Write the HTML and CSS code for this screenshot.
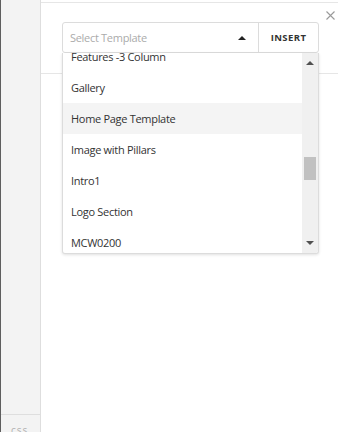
FILE: index.html
```html
<!DOCTYPE html>
<html>
<head>
<meta charset="utf-8">
<link rel="stylesheet" href="styles.css">
</head>
<body>
<div class="app">
  <aside class="sidebar">
    <div class="sidebar-top"></div>
    <div class="sidebar-foot">css</div>
  </aside>
  <main class="main">
    <div class="panel">
      <div class="header">
        <button class="close" aria-label="Close">
          <svg width="9" height="9" viewBox="0 0 9 9"><path d="M0.5 0.5L8.5 8.5M8.5 0.5L0.5 8.5" stroke="#9a9a9a" stroke-width="1.1" fill="none"/></svg>
        </button>
        <div class="picker">
          <div class="select">
            <div class="select-field">
              <span class="placeholder">Select Template</span>
              <span class="caret"></span>
            </div>
            <button class="insert">INSERT</button>
          </div>
          <div class="dropdown">
            <div class="options">
              <ul class="list">
                <li class="item">Features -3 Column</li>
                <li class="item">Gallery</li>
                <li class="item is-hover">Home Page Template</li>
                <li class="item">Image with Pillars</li>
                <li class="item">Intro1</li>
                <li class="item">Logo Section</li>
                <li class="item">MCW0200</li>
              </ul>
            </div>
            <div class="scrollbar">
              <span class="arrow up"></span>
              <div class="track"><div class="thumb"></div></div>
              <span class="arrow down"></span>
            </div>
          </div>
        </div>
      </div>
    </div>
  </main>
</div>
</body>
</html>
```
FILE: styles.css
```css
* { box-sizing: border-box; }
html, body { margin: 0; padding: 0; }
body {
  font-family: "Open Sans", "Noto Sans", sans-serif;
  background: #fff;
  width: 338px;
  height: 432px;
  overflow: hidden;
}
.app {
  display: flex;
  height: 432px;
}
.sidebar {
  width: 41px;
  flex: none;
  background: #f3f3f3;
  border-left: 1px solid #5e5e5e;
  border-right: 1px solid #dedede;
  display: flex;
  flex-direction: column;
}
.sidebar-top { flex: 1; }
.sidebar-foot {
  height: 18px;
  border-top: 1px solid #dedede;
  font-size: 10px;
  color: #b0b0b0;
  padding: 9px 0 0 10px;
  line-height: 12px;
  letter-spacing: 1px;
}
.main {
  flex: 1;
  padding-top: 2px;
}
.panel {
  border-top: 1px solid #e6e6e6;
  height: 100%;
}
.header {
  position: relative;
  height: 71px;
  border-bottom: 1px solid #e6e6e6;
  padding: 19px 0 0 21px;
}
.close {
  position: absolute;
  top: 8px;
  right: 3px;
  border: 0;
  background: none;
  padding: 0;
  width: 9px;
  height: 9px;
  display: flex;
}
.picker {
  position: relative;
  width: 257px;
}
.select {
  display: flex;
  height: 31px;
  border: 1px solid #dcdcdc;
  border-radius: 3px;
  background: #fff;
}
.select-field {
  flex: 1;
  display: flex;
  align-items: center;
  justify-content: space-between;
  padding: 0 12px 0 7px;
}
.placeholder {
  font-size: 11px;
  letter-spacing: -0.3px;
  color: #ababab;
}
.caret {
  width: 0;
  height: 0;
  border-left: 4px solid transparent;
  border-right: 4px solid transparent;
  border-bottom: 4px solid #222;
}
.insert {
  width: 60px;
  border: 0;
  border-left: 1px solid #dcdcdc;
  background: none;
  font-family: "Open Sans", sans-serif;
  font-weight: 700;
  font-size: 9.5px;
  letter-spacing: 0.4px;
  color: #333;
  padding: 0;
}
.dropdown {
  position: absolute;
  top: 31px;
  left: 0;
  right: 0;
  height: 201px;
  background: #fff;
  border: 1px solid #dcdcdc;
  border-top: 0;
  border-radius: 0 0 3px 3px;
  box-shadow: 0 1px 3px rgba(0,0,0,0.12);
  display: flex;
  overflow: hidden;
}
.options {
  flex: 1;
  overflow: hidden;
}
.list {
  list-style: none;
  margin: -12px 0 0 0;
  padding: 0;
}
.item {
  height: 31px;
  line-height: 31px;
  padding-left: 8px;
  font-size: 11px;
  letter-spacing: -0.3px;
  color: #333;
}
.item.is-hover { background: #f4f4f4; }
.scrollbar {
  width: 16px;
  flex: none;
  background: #f0f0f0;
  display: flex;
  flex-direction: column;
  align-items: center;
}
.arrow {
  width: 0;
  height: 0;
  border-left: 4px solid transparent;
  border-right: 4px solid transparent;
}
.arrow.up {
  margin-top: 8px;
  border-bottom: 4px solid #505050;
}
.arrow.down {
  margin-bottom: 8px;
  border-top: 4px solid #505050;
}
.track {
  flex: 1;
  width: 100%;
  padding: 0 2px;
}
.thumb {
  margin-top: 92px;
  height: 23px;
  background: #c1c1c1;
}
```
